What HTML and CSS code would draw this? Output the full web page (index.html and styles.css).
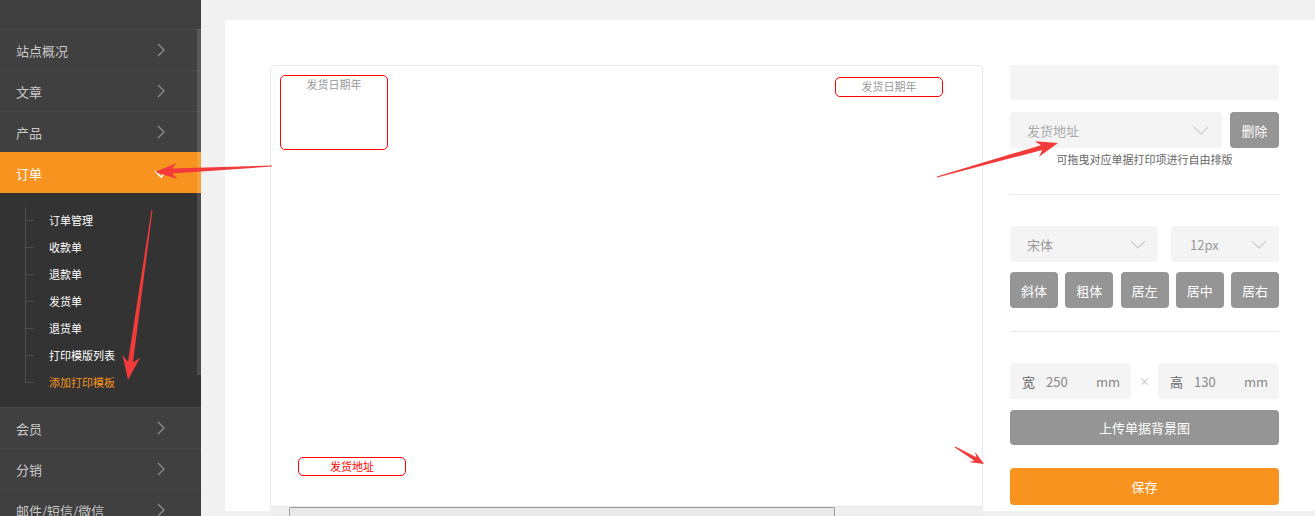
FILE: index.html
```html
<!DOCTYPE html>
<html lang="zh-CN">
<head>
	<meta charset="UTF-8">
	<meta name="viewport" content="width=device-width, initial-scale=1.0">
	<title>添加打印模板</title>
	<link rel="stylesheet" href="styles.css">
</head>

<body>
	<!-- 左侧菜单 -->
	<aside class="sidebar">
		<div class="menu-top"></div>
		<a class="menu-item">站点概况<svg class="chev" width="8" height="14" viewBox="0 0 8 14"><polyline points="1,1 7,7 1,13"/></svg></a>
		<a class="menu-item">文章<svg class="chev" width="8" height="14" viewBox="0 0 8 14"><polyline points="1,1 7,7 1,13"/></svg></a>
		<a class="menu-item">产品<svg class="chev" width="8" height="14" viewBox="0 0 8 14"><polyline points="1,1 7,7 1,13"/></svg></a>
		<a class="menu-item active">订单<svg class="chev-down" width="14" height="8" viewBox="0 0 14 8"><polyline points="1,1 7,7 13,1"/></svg></a>
		<ul class="submenu">
			<li>订单管理</li>
			<li>收款单</li>
			<li>退款单</li>
			<li>发货单</li>
			<li>退货单</li>
			<li>打印模版列表</li>
			<li class="current">添加打印模板</li>
		</ul>
		<a class="menu-item">会员<svg class="chev" width="8" height="14" viewBox="0 0 8 14"><polyline points="1,1 7,7 1,13"/></svg></a>
		<a class="menu-item">分销<svg class="chev" width="8" height="14" viewBox="0 0 8 14"><polyline points="1,1 7,7 1,13"/></svg></a>
		<a class="menu-item">邮件/短信/微信<svg class="chev" width="8" height="14" viewBox="0 0 8 14"><polyline points="1,1 7,7 1,13"/></svg></a>
		<div class="side-thumb"></div>
	</aside>

	<main class="main">
		<div class="panel">
			<!-- 打印画布 -->
			<div class="canvas-wrap">
				<div class="canvas">
					<div class="print-item item-date">发货日期年</div>
					<div class="print-item item-date2">发货日期年</div>
					<div class="print-item item-addr">发货地址</div>
				</div>
				<div class="hscroll"><div class="hthumb"></div></div>
			</div>

			<!-- 右侧设置 -->
			<div class="settings">
				<div class="field field-name"></div>
				<div class="row">
					<div class="field select select-item">发货地址<svg class="arrow-down" width="16" height="9" viewBox="0 0 16 9"><polyline points="1,1 8,8 15,1"/></svg></div>
					<button class="btn btn-del">删除</button>
				</div>
				<p class="hint">可拖曳对应单据打印项进行自由排版</p>
				<div class="divider"></div>

				<div class="row">
					<div class="field select select-font">宋体<svg class="arrow-down" width="16" height="9" viewBox="0 0 16 9"><polyline points="1,1 8,8 15,1"/></svg></div>
					<div class="field select select-size">12px<svg class="arrow-down" width="16" height="9" viewBox="0 0 16 9"><polyline points="1,1 8,8 15,1"/></svg></div>
				</div>
				<div class="row tools">
					<button class="btn">斜体</button>
					<button class="btn">粗体</button>
					<button class="btn">居左</button>
					<button class="btn">居中</button>
					<button class="btn">居右</button>
				</div>
				<div class="divider divider-2"></div>

				<div class="row size-row">
					<div class="field size-box"><span class="lbl">宽</span><span class="num">250</span><span class="unit">mm</span></div>
					<span class="times">×</span>
					<div class="field size-box"><span class="lbl">高</span><span class="num">130</span><span class="unit">mm</span></div>
				</div>
				<button class="btn btn-wide btn-upload">上传单据背景图</button>
				<button class="btn btn-wide btn-save">保存</button>
			</div>
		</div>
	</main>

	<!-- 标注箭头 -->
	<svg class="marks" width="1315" height="516" viewBox="0 0 1315 516">
		<polygon points="155,172 176.6,162.9 171.9,168.6 272,165.5 272,166.5 172.1,173.6 177.4,178.9"/>
		<polygon points="128,380 140.3,357.5 133,362.5 152.5,210.1 151.5,209.9 128,361.8 122.5,355"/>
		<polygon points="1058,143 1034.7,141.3 1041,145.2 936.9,176.5 937.1,177.5 1042.3,150 1039,156.7"/>
		<polygon points="984,464 975,451.7 976.4,457.2 955.3,446.6 954.8,447.4 974.4,460.7 968.9,462.1"/>
	</svg>
</body>

</html>
```

FILE: styles.css
```css
* {
	margin: 0;
	padding: 0;
	box-sizing: border-box;
}

body {
	display: flex;
	height: 516px;
	overflow: hidden;
	background: #f1f1f1;
	font-family: "Noto Sans CJK SC", "Liberation Sans", sans-serif;
	position: relative;
}

/* 侧栏 */
.sidebar {
	position: relative;
	width: 201px;
	flex-shrink: 0;
	background: #404040;
	display: flex;
	flex-direction: column;
}

.sidebar > * {
	flex-shrink: 0;
}

.menu-top {
	height: 29px;
}

.menu-item {
	display: flex;
	align-items: center;
	justify-content: space-between;
	height: 41px;
	padding: 0 36px 0 16px;
	border-top: 1px solid #4b4b4b;
	color: #c9c9c9;
	font-size: 13px;
}

.menu-item .chev {
	fill: none;
	stroke: #8a8a8a;
	stroke-width: 1.4;
}

.menu-item.active {
	background: #f7931e;
	border-top-color: #f7931e;
	color: #fff;
	padding-right: 33px;
}

.chev-down {
	fill: none;
	stroke: #fff;
	stroke-width: 1.6;
	margin-top: 2px;
}

.submenu {
	position: relative;
	list-style: none;
	background: #333;
	height: 214px;
	padding: 14px 0 0 49px;
}

.submenu::before {
	content: "";
	position: absolute;
	left: 25px;
	top: 14px;
	height: 175px;
	border-left: 1px solid #4e4e4e;
}

.submenu li {
	position: relative;
	height: 27px;
	line-height: 27px;
	font-size: 11px;
	color: #fff;
}

.submenu li::before {
	content: "";
	position: absolute;
	left: -24px;
	top: 13px;
	width: 9px;
	border-top: 1px solid #4e4e4e;
}

.submenu li.current {
	color: #f7931e;
}

.side-thumb {
	position: absolute;
	right: 0;
	top: 29px;
	width: 4px;
	height: 346px;
	background: rgba(255, 255, 255, 0.13);
}

/* 主区域 */
.main {
	flex: 1;
	padding: 20px 0 0 24px;
}

.panel {
	display: flex;
	align-items: flex-start;
	gap: 27px;
	height: 491px;
	padding: 45px 0 0 45px;
	background: #fff;
}

.canvas-wrap {
	width: 713px;
	flex-shrink: 0;
}

.canvas {
	position: relative;
	height: 442px;
	border: 1px solid #e8e8e8;
	border-radius: 4px 4px 0 0;
}

.print-item {
	position: absolute;
	width: 108px;
	border: 1px solid #f00;
	border-radius: 5px;
	text-align: center;
	font-size: 11px;
	line-height: 16px;
	color: #999;
}

.item-date {
	left: 9px;
	top: 9px;
	height: 75px;
}

.item-date2 {
	left: 564px;
	top: 11px;
	height: 20px;
	line-height: 17px;
}

.item-addr {
	left: 27px;
	top: 391px;
	height: 19px;
	line-height: 16px;
	color: #f00;
}

.hscroll {
	height: 12px;
	background: #efefef;
	padding-left: 19px;
}

.hthumb {
	width: 546px;
	height: 12px;
	border: 1px solid #9a9a9a;
	border-bottom: none;
	border-radius: 2px 2px 0 0;
	background: #e9e9e9;
}

/* 右侧设置 */
.settings {
	width: 269px;
	flex-shrink: 0;
	display: flex;
	flex-direction: column;
	font-size: 13px;
}

.row {
	display: flex;
	gap: 8px;
}

.field {
	height: 36px;
	background: #f4f4f4;
	border-radius: 4px;
}

.field-name {
	height: 35px;
	margin-bottom: 12px;
}

.select {
	display: flex;
	align-items: center;
	justify-content: space-between;
	padding: 0 12px 0 17px;
	color: #aaa;
}

.arrow-down {
	fill: none;
	stroke: #cfcfcf;
	stroke-width: 1.3;
}

.select-item {
	flex: 1;
	padding-right: 13px;
}

.btn {
	border: none;
	border-radius: 4px;
	background: #959595;
	color: #fff;
	font: 13px "Noto Sans CJK SC", "Liberation Sans", sans-serif;
	height: 36px;
}

.btn-del {
	width: 49px;
}

.hint {
	margin-top: 2px;
	text-align: center;
	font-size: 11px;
	line-height: 18px;
	color: #666;
}

.divider {
	margin: 26px 0 31px;
	border-top: 1px solid #e8e8e8;
}

.divider-2 {
	margin-top: 23px;
}

.select-font {
	width: 148px;
	color: #999;
}

.select-size {
	flex: 1;
	margin-left: 5px;
	padding-left: 19px;
	color: #999;
}

.tools {
	margin-top: 10px;
	justify-content: space-between;
	gap: 0;
}

.tools .btn {
	width: 48px;
}

.size-row {
	gap: 0;
	align-items: center;
}

.size-box {
	display: flex;
	align-items: center;
	width: 121px;
	padding: 0 11px 0 12px;
	color: #888;
}

.size-box .lbl {
	color: #666;
	margin-right: 11px;
}

.size-box .unit {
	margin-left: auto;
}

.times {
	width: 27px;
	text-align: center;
	font-size: 11px;
	color: #bbb;
}

.btn-wide {
	width: 100%;
	height: 35px;
}

.btn-upload {
	margin-top: 11px;
}

.btn-save {
	margin-top: 23px;
	height: 37px;
	background: #f7931e;
}

/* 标注 */
.marks {
	position: absolute;
	left: 0;
	top: 0;
	pointer-events: none;
	fill: #f23a3a;
}
```
